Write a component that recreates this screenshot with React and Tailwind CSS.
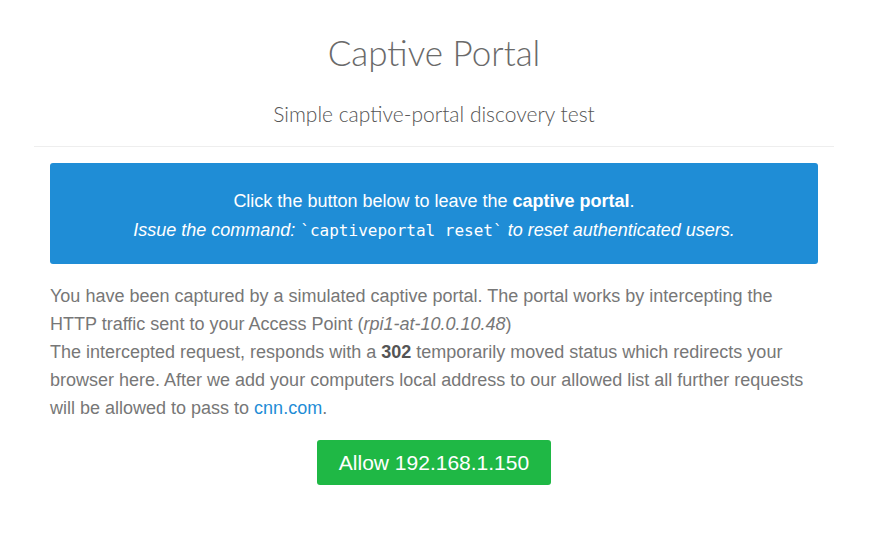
export default function App() {
  const narrow = { fontFamily: '"Liberation Sans Narrow", "Liberation Sans", Arial, sans-serif' };
  return (
    <div className="min-h-[552px] bg-white">
      <div className="ml-[34px] w-[800px]">
        <div className="pt-[30px] text-center font-['Lato',sans-serif] font-light text-[#6a6a6a]">
          <h1 className="text-[35px] leading-[44px]">Captive Portal</h1>
          <h2 className="mt-[27px] text-[21px] leading-[26px] text-[#555]">Simple captive-portal discovery test</h2>
        </div>
        <div className="mt-[19px] border-t border-[#eee]"></div>
        <div className="px-4">
          <div
            className="mt-4 rounded-[3px] bg-[#1f8dd6] pt-[24px] pb-[19px] text-center text-[18px] leading-[29px] text-white"
            style={narrow}
          >
            <p>
              Click the button below to leave the <b>captive portal</b>.
            </p>
            <p className="italic">
              Issue the command:{' '}
              <code className="font-['DejaVu_Sans_Mono',monospace] text-[16px] not-italic">`captiveportal reset`</code>{' '}
              to reset authenticated users.
            </p>
          </div>
          <p className="mt-[18px] text-[18px] leading-[28px] text-[#777]" style={narrow}>
            You have been captured by a simulated captive portal. The portal works by intercepting the HTTP traffic
            sent to your Access Point (<i>rpi1-at-10.0.10.48</i>)
            <br />
            The intercepted request, responds with a <b className="text-[#555]">302</b> temporarily moved status which
            redirects your browser here. After we add your computers local address to our allowed list all further
            requests will be allowed to pass to <a className="text-[#1f8dd6]">cnn.com</a>.
          </p>
          <div className="mt-[18px] flex justify-center">
            <button className="h-[45px] w-[234px] rounded-[3px] bg-[#1fb845] font-['Liberation_Sans',Arial,sans-serif] text-[21px] text-white">
              Allow 192.168.1.150
            </button>
          </div>
        </div>
      </div>
    </div>
  );
}
